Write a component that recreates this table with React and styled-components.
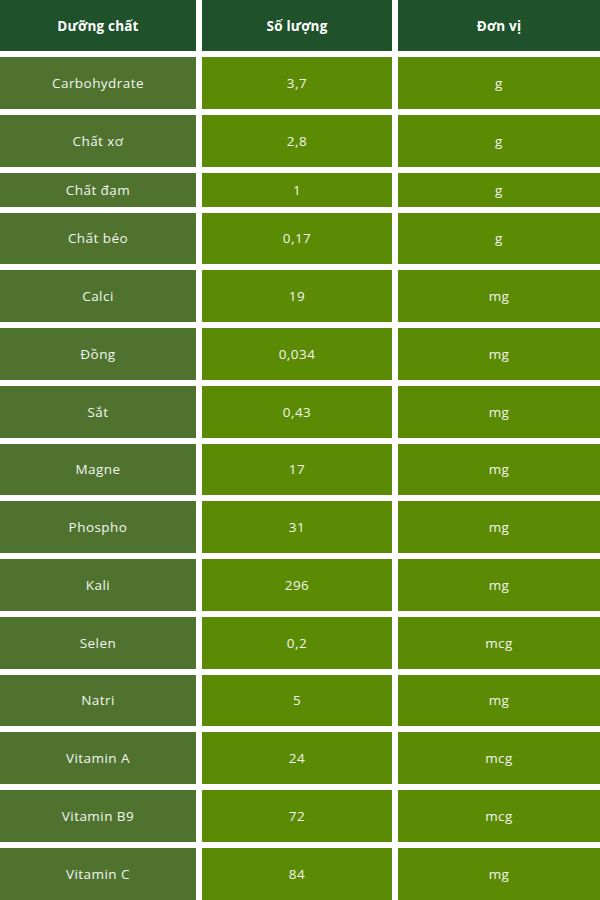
import React from "react";
import styled, { createGlobalStyle } from "styled-components";

const Global = createGlobalStyle`
  html, body { margin: 0; padding: 0; background: #ffffff; }
  body { font-family: "Open Sans", "Noto Sans", sans-serif; }
`;

const Table = styled.div`
  display: flex;
  flex-direction: column;
  gap: 6px;
  width: 600px;
  background: #ffffff;
`;

const Row = styled.div`
  display: grid;
  grid-template-columns: 196px 190px 1fr;
  column-gap: 6px;
  height: ${(p) => p.$h}px;
`;

const Cell = styled.div`
  display: flex;
  align-items: center;
  justify-content: center;
  background: ${(p) => (p.$first ? "#4f732e" : "#5b8b04")};
  color: #f2f5ee;
  font-size: 13.5px;
  font-weight: 400;
  letter-spacing: 0.45px;
`;

const HeadCell = styled.div`
  display: flex;
  align-items: center;
  justify-content: center;
  background: #1f512b;
  color: #ffffff;
  font-size: 13.5px;
  font-weight: 700;
  letter-spacing: 0.2px;
`;

const data = [
  ["Carbohydrate", "3,7", "g"],
  ["Chất xơ", "2,8", "g"],
  ["Chất đạm", "1", "g", 34],
  ["Chất béo", "0,17", "g"],
  ["Calci", "19", "mg"],
  ["Đồng", "0,034", "mg"],
  ["Sắt", "0,43", "mg"],
  ["Magne", "17", "mg"],
  ["Phospho", "31", "mg"],
  ["Kali", "296", "mg"],
  ["Selen", "0,2", "mcg"],
  ["Natri", "5", "mg"],
  ["Vitamin A", "24", "mcg"],
  ["Vitamin B9", "72", "mcg"],
  ["Vitamin C", "84", "mg"],
];

export default function App() {
  return (
    <>
      <Global />
      <Table>
        <Row $h={51}>
          <HeadCell>Dưỡng chất</HeadCell>
          <HeadCell>Số lượng</HeadCell>
          <HeadCell>Đơn vị</HeadCell>
        </Row>
        {data.map(([n, q, u, h]) => (
          <Row key={n} $h={h || 51.75}>
            <Cell $first>{n}</Cell>
            <Cell>{q}</Cell>
            <Cell>{u}</Cell>
          </Row>
        ))}
      </Table>
    </>
  );
}
